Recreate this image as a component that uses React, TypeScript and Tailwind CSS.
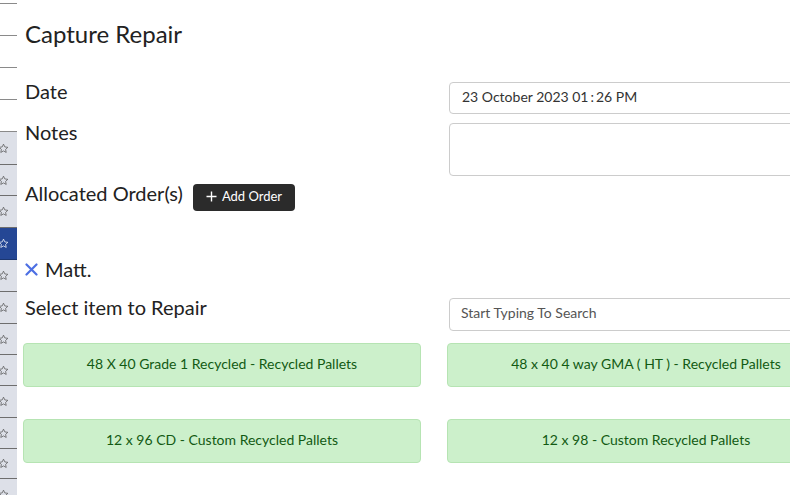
const font = { fontFamily: 'Lato, "Noto Sans", sans-serif' };

const sideRows = [
  { h: "h-[4px]", tone: "white" },
  { h: "h-[32px]", tone: "white" },
  { h: "h-[32px]", tone: "white" },
  { h: "h-[32px]", tone: "white" },
  { h: "h-[32px]", tone: "white" },
  { h: "h-[33px]", tone: "gray" },
  { h: "h-[31px]", tone: "gray" },
  { h: "h-[32px]", tone: "gray" },
  { h: "h-[32px]", tone: "blue" },
  { h: "h-[32px]", tone: "gray" },
  { h: "h-[32px]", tone: "gray" },
  { h: "h-[31px]", tone: "gray" },
  { h: "h-[31px]", tone: "gray" },
  { h: "h-[32px]", tone: "gray" },
  { h: "h-[31px]", tone: "gray" },
  { h: "h-[30px]", tone: "gray" },
  { h: "h-[32px]", tone: "gray" },
];

const items = [
  "48 X 40 Grade 1 Recycled - Recycled Pallets",
  "48 x 40 4 way GMA ( HT ) - Recycled Pallets",
  "12 x 96 CD - Custom Recycled Pallets",
  "12 x 98 - Custom Recycled Pallets",
];

function Star({ color }: { color: string }) {
  return (
    <svg width="11" height="11" viewBox="0 0 24 24" fill="none" stroke={color} strokeWidth="1.6" strokeLinejoin="round">
      <path d="M12 2.5l2.9 6.1 6.6.8-4.9 4.6 1.3 6.6L12 17.3l-5.9 3.3 1.3-6.6-4.9-4.6 6.6-.8z" />
    </svg>
  );
}

function Sidebar() {
  return (
    <div className="w-[17px] shrink-0 flex flex-col overflow-hidden">
      {sideRows.map((r, i) => (
        <div
          key={i}
          className={`${r.h} shrink-0 flex items-center border-b ${
            r.tone === "white"
              ? "bg-white border-[#8a8a8a]"
              : r.tone === "blue"
              ? "bg-[#254795] border-[#1c3670]"
              : "bg-[#dde0e8] border-[#6e6e6e]"
          }`}
        >
          {r.tone !== "white" && (
            <span className="-ml-[2px]">
              <Star color={r.tone === "blue" ? "#ffffff" : "#555555"} />
            </span>
          )}
        </div>
      ))}
    </div>
  );
}

export default function App() {
  return (
    <div className="w-[790px] h-[495px] overflow-hidden bg-white flex text-[#222]" style={font}>
      <Sidebar />
      <div className="w-[850px] shrink-0 pl-[6px] pt-[16px]">
        <h1 className="pl-[2px] text-[24px] leading-[36px] font-normal">Capture Repair</h1>

        <div className="mt-[30px] grid grid-cols-[426px_400px]">
          <div className="pl-[2px] text-[20px] leading-[18px]">Date</div>
          <div className="h-[32px] border border-[#ccc] rounded-[4px] flex items-center px-[12px] pb-[4px] text-[14px] text-[#333]">
            23 October 2023 01<span className="px-[2px]">:</span>26 PM
          </div>

          <div className="pl-[2px] mt-[9px] text-[20px] leading-[18px]">Notes</div>
          <div className="mt-[9px] h-[53px] border border-[#ccc] rounded-[4px]" />

          <div className="pl-[2px] mt-[8px] flex items-start gap-[10px] text-[20px] leading-[18px]">
            <span>Allocated Order(s)</span>
            <button className="h-[27px] px-[13px] pb-[2px] rounded-[4px] bg-[#2b2b2b] text-white text-[13px] leading-none flex items-center gap-[5px]">
              <svg width="11" height="11" viewBox="0 0 11 11" stroke="#ffffff" strokeWidth="1.4">
                <path d="M5.5 0.5v10M0.5 5.5h10" />
              </svg>
              Add Order
            </button>
          </div>
          <div />
        </div>

        <div className="pl-[2px] mt-[47px] flex items-center gap-[7px] text-[20px] leading-[22px]">
          <svg width="13" height="13" viewBox="0 0 13 13" stroke="#4d6fe3" strokeWidth="2.2" strokeLinecap="round">
            <path d="M1.5 1.5l10 10M11.5 1.5l-10 10" />
          </svg>
          <span>Matt.</span>
        </div>

        <div className="mt-[18px] grid grid-cols-[426px_400px]">
          <div className="pl-[2px] text-[20px] leading-[18px]">Select item to Repair</div>
          <div className="h-[33px] border border-[#ccc] rounded-[4px] flex items-center px-[11px] pb-[4px] text-[14px] text-[#555]">
            Start Typing To Search
          </div>
        </div>

        <div className="mt-[12px] grid grid-cols-[398px_398px] gap-x-[26px] gap-y-[32px]">
          {items.map((t) => (
            <div
              key={t}
              className="h-[44px] pb-[4px] rounded-[4px] bg-[#ccf0cb] border border-[#b6e4b3] flex items-center justify-center text-[14px] text-[#125a13]"
            >
              {t}
            </div>
          ))}
        </div>
      </div>
    </div>
  );
}
